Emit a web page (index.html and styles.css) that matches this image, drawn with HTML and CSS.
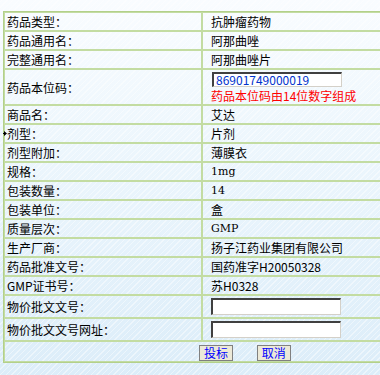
FILE: index.html
```html
<!DOCTYPE html>
<html lang="zh-CN">
<head>
    <meta charset="UTF-8">
    <meta name="viewport" content="width=device-width, initial-scale=1.0">
    <title>药品信息</title>
    <link rel="stylesheet" href="styles.css">
</head>
<body>
    <table class="drug-form">
        <tr><td class="label">药品类型：</td><td class="value">抗肿瘤药物</td></tr>
        <tr><td class="label">药品通用名：</td><td class="value">阿那曲唑</td></tr>
        <tr><td class="label">完整通用名：</td><td class="value">阿那曲唑片</td></tr>
        <tr class="code-row">
            <td class="label">药品本位码：</td>
            <td class="value">
                <input class="field code" type="text" value="86901749000019">
                <div class="hint">药品本位码由14位数字组成</div>
            </td>
        </tr>
        <tr><td class="label">商品名：</td><td class="value">艾达</td></tr>
        <tr>
            <td class="label marked">
                <svg class="marker" width="7" height="5" viewBox="0 0 7 5"><path d="M0 2h4V0l3 2.5L4 5V3H0z" fill="#000"/></svg>剂型：
            </td>
            <td class="value">片剂</td>
        </tr>
        <tr><td class="label">剂型附加：</td><td class="value">薄膜衣</td></tr>
        <tr><td class="label">规格：</td><td class="value latin">1mg</td></tr>
        <tr><td class="label">包装数量：</td><td class="value latin">14</td></tr>
        <tr><td class="label">包装单位：</td><td class="value">盒</td></tr>
        <tr><td class="label">质量层次：</td><td class="value latin">GMP</td></tr>
        <tr><td class="label">生产厂商：</td><td class="value">扬子江药业集团有限公司</td></tr>
        <tr><td class="label">药品批准文号：</td><td class="value">国药准字H20050328</td></tr>
        <tr><td class="label">GMP证书号：</td><td class="value">苏H0328</td></tr>
        <tr class="input-row"><td class="label">物价批文文号：</td><td class="value"><input class="field" type="text"></td></tr>
        <tr class="input-row"><td class="label">物价批文文号网址：</td><td class="value"><input class="field" type="text"></td></tr>
        <tr class="actions">
            <td colspan="2">
                <button class="btn">投标</button>
                <button class="btn">取消</button>
            </td>
        </tr>
    </table>
</body>
</html>
```

FILE: styles.css
```css
body {
    margin: 11px 0 0 3px;
    font-family: "Noto Sans CJK SC", sans-serif;
    font-size: 12px;
    color: #000;
    min-height: 364px;
    background:
        repeating-linear-gradient(-45deg, rgba(255, 255, 255, 0.45) 0, rgba(255, 255, 255, 0.45) 1px, rgba(255, 255, 255, 0) 1px, rgba(255, 255, 255, 0) 4px),
        linear-gradient(to bottom, #f9fcff 0%, #eef7fd 35%, #dcedf9 100%);
}
.drug-form {
    width: 377px;
    border: 1px solid #b3d08a;
    border-right: 0;
    border-collapse: separate;
    border-spacing: 0;
}
.drug-form td {
    border: 1px solid #c3dca2;
    height: 17px;
    line-height: 17px;
    padding: 0;
    white-space: nowrap;
}
.drug-form td.value,
.actions td {
    border-right: 0;
}
.label {
    width: 194px;
    padding-left: 2px !important;
}
.marked {
    position: relative;
}
.marker {
    position: absolute;
    left: -5px;
    top: 6px;
}
.value {
    padding-left: 8px !important;
}
.latin {
    font-family: "DejaVu Serif", serif;
    font-size: 11px;
}
.field {
    box-sizing: border-box;
    width: 130px;
    height: 17px;
    margin: 2px 0;
    padding: 0 2px;
    border-style: solid;
    border-width: 2px 1px 1px 2px;
    border-color: #404040 #d4d0c8 #d4d0c8 #404040;
    background: #fff;
    font-family: "Noto Sans CJK SC", sans-serif;
    font-size: 12px;
    vertical-align: middle;
}
.input-row td {
    height: 21px;
}
.code-row td {
    height: 34px;
}
.code-row .field {
    display: block;
    height: 15px;
    margin: 1px 0 0 1px;
    color: #0033cc;
    line-height: 11px;
}
.hint {
    color: #ff0000;
    line-height: 17px;
}
.actions td {
    height: 18px;
    padding-left: 194px !important;
}
.btn {
    width: 34px;
    height: 16px;
    margin: 0 21px 0 0;
    padding: 0;
    border: 1px solid #808080;
    background: #ece9d8;
    color: #0000ff;
    font-family: "Noto Sans CJK SC", sans-serif;
    font-size: 12px;
    line-height: 14px;
    vertical-align: middle;
}
```
